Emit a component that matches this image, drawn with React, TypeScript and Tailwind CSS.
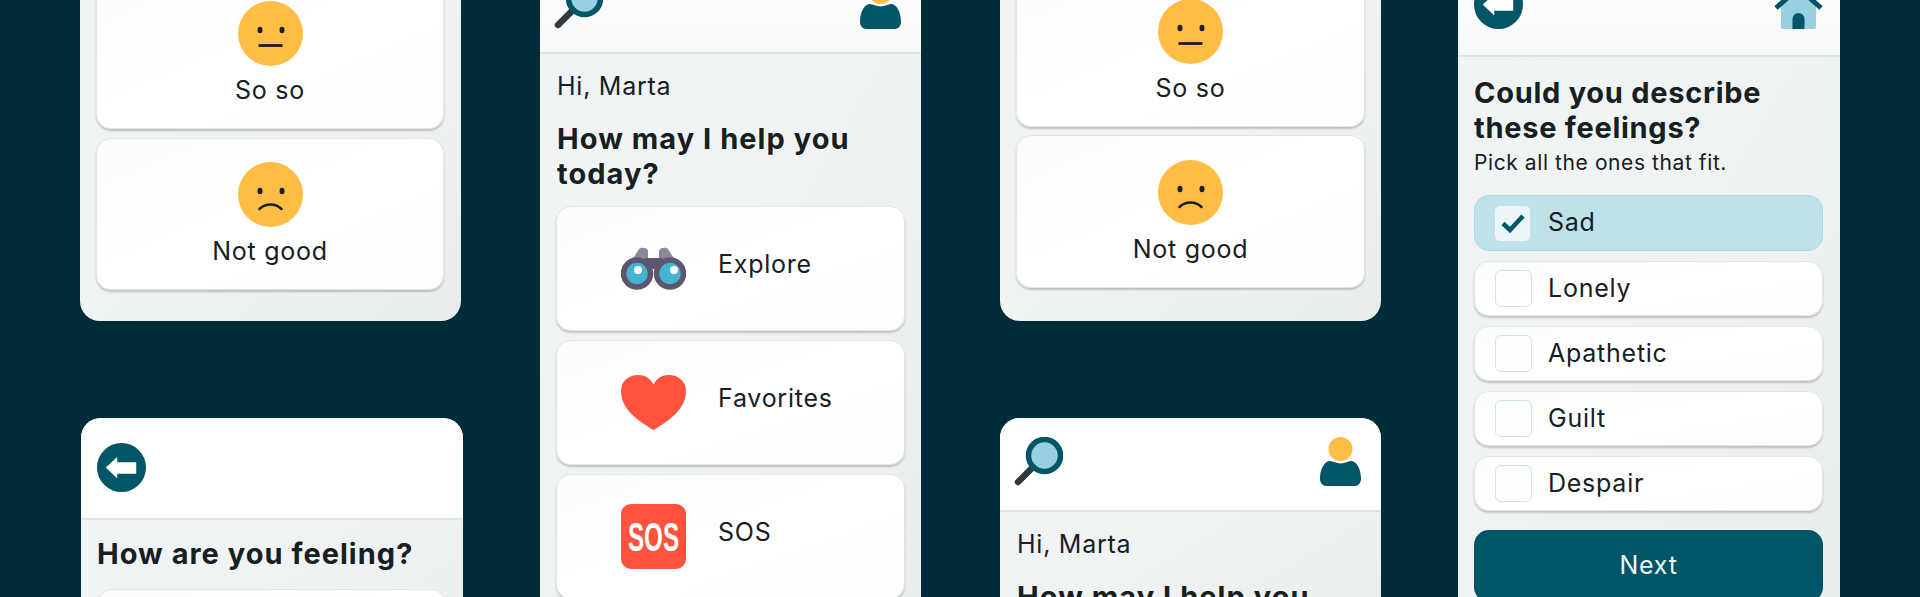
import type { ReactNode } from 'react'

const FONT = 'font-["Inter","Noto_Sans",sans-serif]'

function BackIcon() {
  return (
    <svg width="49" height="49" viewBox="0 0 49 49">
      <circle cx="24.5" cy="24.5" r="24.5" fill="#005567" />
      <path d="M9 24.500 20 14.500v5h19v11H20v4.500z" fill="#fff" stroke="#fff" strokeLinejoin="round" strokeWidth="0.5" />
    </svg>
  )
}

function SearchIcon() {
  return (
    <svg width="49" height="49" viewBox="0 0 49 49">
      <path d="M4 45 18 31" stroke="#2f3a40" strokeWidth="6.5" strokeLinecap="round" />
      <circle cx="30.5" cy="18.5" r="16" fill="#97d0de" stroke="#005567" strokeWidth="5.5" />
    </svg>
  )
}

function PersonIcon() {
  return (
    <svg width="41" height="49" viewBox="0 0 41 49">
      <circle cx="20.5" cy="12" r="12" fill="#ffbd45" />
      <path
        d="M10 24c3 0 6 2.500 10.500 2.500S28 24 31 24c5 0 10 7 10 18 0 4-3 7-6 7H6c-3 0-6-3-6-7 0-11 5-18 10-18z"
        fill="#005567"
      />
    </svg>
  )
}

function HomeIcon() {
  return (
    <svg width="49" height="49" viewBox="0 0 49 49">
      <path d="M7 26 24.500 10 42 26v21a2 2 0 0 1-2 2H9a2 2 0 0 1-2-2z" fill="#97d0de" />
      <path d="M2 28 24.500 8 47 28" fill="none" stroke="#005567" strokeWidth="5" />
      <path d="M18.500 49V39a6 6 0 0 1 12 0v10z" fill="#005567" />
    </svg>
  )
}

function Binoculars() {
  return (
    <svg width="65" height="65" viewBox="0 0 65 65">
      <path d="M5 34 18 13c2-2 8-2 9 2v19zM60 34 47 13c-2-2-8-2-9 2v19z" fill="#8b8795" />
      <rect x="24" y="22" width="17" height="11" fill="#5e5570" />
      <circle cx="16" cy="37.500" r="13.500" fill="#46b4cf" stroke="#5e5570" strokeWidth="5.500" />
      <circle cx="49" cy="37.500" r="13.500" fill="#46b4cf" stroke="#5e5570" strokeWidth="5.500" />
      <circle cx="17" cy="34" r="4" fill="#fff" />
      <circle cx="53" cy="34" r="4" fill="#fff" />
    </svg>
  )
}

function Heart() {
  return (
    <svg width="65" height="65" viewBox="0 0 65 65">
      <path
        d="M32.500 60C14 49 0 38 0 21 0 11 8 5 17 5c7 0 12 3 15.500 9.500C36 8 41 5 48 5c9 0 17 6 17 16 0 17-14 28-32.500 39z"
        fill="#ff533d"
      />
    </svg>
  )
}

function SosIcon() {
  return (
    <svg width="65" height="65" viewBox="0 0 65 65">
      <rect width="65" height="65" rx="10" fill="#ff533d" />
      <text
        x="32.500"
        y="47"
        textAnchor="middle"
        textLength="51"
        lengthAdjust="spacingAndGlyphs"
        fill="#fff"
        fontFamily="Liberation Sans"
        fontWeight="700"
        fontSize="41"
      >
        SOS
      </text>
    </svg>
  )
}

function Face({ sad }: { sad?: boolean }) {
  return (
    <svg width="65" height="65" viewBox="0 0 65 65">
      <circle cx="32.500" cy="32.500" r="32.500" fill="#ffbd45" />
      <ellipse cx="22" cy="29" rx="2.500" ry="3.300" fill="#17201f" />
      <ellipse cx="44" cy="29" rx="2.500" ry="3.300" fill="#17201f" />
      {sad ? (
        <path d="M21.500 47c6-6 16-6 22 0" fill="none" stroke="#17201f" strokeWidth="2.500" strokeLinecap="round" />
      ) : (
        <path d="M20.500 44.500h24" stroke="#17201f" strokeWidth="2.800" />
      )}
    </svg>
  )
}

const cardClass =
  'rounded-[15px] border border-[#e2e6e7] bg-gradient-to-br from-[#fafbfb] via-white to-[#fdfdfd] shadow-[0_2px_2px_rgb(0_0_0_/_0.2)]'

function MoodCard({ label, sad, height }: { label: string; sad?: boolean; height: string }) {
  return (
    <div className={`${cardClass} flex flex-col items-center justify-end pb-[21px] ${height}`}>
      <Face sad={sad} />
      <span className="mt-[7px] text-[25px] leading-[34px] tracking-[0.03em] text-[#17201f]">{label}</span>
    </div>
  )
}

function MenuCard({ icon, label }: { icon: ReactNode; label: string }) {
  return (
    <div className={`${cardClass} flex h-[125px] shrink-0 items-center pl-[64px]`}>
      {icon}
      <span className="mb-[8px] ml-[32px] text-[25px] tracking-[0.03em] text-[#17201f]">{label}</span>
    </div>
  )
}

function Header({
  left,
  right,
  height,
  pad,
  fade,
}: {
  left: ReactNode
  right?: ReactNode
  height: string
  pad: string
  fade?: boolean
}) {
  return (
    <header
      className={`flex shrink-0 items-start justify-between border-b-2 border-[#e0e4e5] ${
        fade ? 'bg-gradient-to-b from-white to-[#f7f8f8]' : 'bg-white'
      } ${height} ${pad}`}
    >
      {left}
      {right}
    </header>
  )
}

function Greeting() {
  return (
    <div className="px-[17px] pt-[18px]">
      <p className="text-[25px] leading-[28px] tracking-[0.03em] text-[#17201f]">Hi, Marta</p>
      <h2 className="mt-[21px] text-[29px] font-bold leading-[35px] tracking-[0.036em] text-[#17201f]">
        How may I help you today?
      </h2>
    </div>
  )
}

function Option({ label, checked }: { label: string; checked?: boolean }) {
  return (
    <div
      className={
        checked
          ? 'flex h-[56px] items-center rounded-[15px] border border-[#a9d8e3] bg-[#bfe2ea] pl-[20px]'
          : `${cardClass} flex h-[55px] items-center pl-[20px]`
      }
    >
      <span
        className={
          checked
            ? 'mr-[18px] flex h-[35px] w-[35px] items-center justify-center rounded-[5px] bg-[#ecf6f9]'
            : 'mr-[16px] h-[37px] w-[37px] rounded-[6px] border border-[#d3e2e4] bg-white/40'
        }
      >
        {checked && (
          <svg width="24" height="20" viewBox="0 0 24 20">
            <path d="M2 10.500 9 17 22 3" fill="none" stroke="#005567" strokeWidth="4.500" />
          </svg>
        )}
      </span>
      <span className="text-[25px] tracking-[0.03em] text-[#17201f]">{label}</span>
    </div>
  )
}

const panelClass =
  'overflow-hidden bg-gradient-to-br from-[#f1f4f5] via-[#f0f3f4] to-[#e9edee] shadow-[0_1px_1px_rgb(0_0_0_/_0.15)]'

export default function App() {
  return (
    <div className={`flex h-[597px] gap-[78px] overflow-hidden bg-[#012d3b] pl-[80px] ${FONT}`}>
      {/* column 1 */}
      <div className="flex w-[382px] shrink-0 flex-col">
        <section className={`${panelClass} mt-[-24px] w-[381px] shrink-0 rounded-b-[20px] pb-[31px] pl-[16px] pr-[17px]`}>
          <div className="flex flex-col gap-[9px]">
            <MoodCard label="So so" height="h-[153px]" />
            <MoodCard label="Not good" sad height="h-[152px]" />
          </div>
        </section>
        <section className={`${panelClass} ml-[1px] mt-[97px] w-[382px] shrink-0 rounded-t-[20px]`}>
          <Header left={<BackIcon />} height="h-[102px]" pad="pl-[16px] pr-[17px] pt-[25px]" />
          <div className="pl-[16px] pr-[17px] pt-[17px]">
            <h2 className="text-[29px] font-bold leading-[34px] tracking-[0.035em] text-[#17201f]">
              How are you feeling?
            </h2>
            <div className={`${cardClass} mt-[18px] h-[152px]`} />
          </div>
        </section>
      </div>

      {/* column 2 */}
      <section className={`${panelClass} mt-[-39px] flex h-[660px] w-[381px] shrink-0 flex-col`}>
        <Header left={<SearchIcon />} right={<PersonIcon />} height="h-[93px]" pad="pl-[14px] pr-[20px] pt-[19px]" fade />
        <Greeting />
        <div className="mt-[15px] flex flex-col gap-[9px] px-[16px]">
          <MenuCard icon={<Binoculars />} label="Explore" />
          <MenuCard icon={<Heart />} label="Favorites" />
          <MenuCard icon={<SosIcon />} label="SOS" />
        </div>
      </section>

      {/* column 3 */}
      <div className="ml-[1px] flex w-[381px] shrink-0 flex-col">
        <section className={`${panelClass} mt-[-26px] shrink-0 rounded-b-[20px] px-[16px] pb-[33px]`}>
          <div className="flex flex-col gap-[8px]">
            <MoodCard label="So so" height="h-[153px]" />
            <MoodCard label="Not good" sad height="h-[153px]" />
          </div>
        </section>
        <section className={`${panelClass} mt-[97px] shrink-0 rounded-t-[20px]`}>
          <Header left={<SearchIcon />} right={<PersonIcon />} height="h-[94px]" pad="pl-[14px] pr-[20px] pt-[19px]" />
          <Greeting />
        </section>
      </div>

      {/* column 4 */}
      <section className={`${panelClass} ml-[-1px] mt-[-45px] flex h-[660px] w-[382px] shrink-0 flex-col`}>
        <Header left={<BackIcon />} right={<HomeIcon />} height="h-[102px]" pad="pl-[16px] pr-[17px] pt-[25px]" fade />
        <div className="flex flex-col pl-[16px] pr-[17px] pt-[18px]">
          <h2 className="text-[29px] font-bold leading-[35px] tracking-[0.025em] text-[#17201f]">
            Could you describe these feelings?
          </h2>
          <p className="mt-[4px] text-[21px] leading-[28px] tracking-[0.028em] text-[#17201f]">
            Pick all the ones that fit.
          </p>
          <div className="mt-[18px] flex flex-col gap-[10px]">
            <Option label="Sad" checked />
            <Option label="Lonely" />
            <Option label="Apathetic" />
            <Option label="Guilt" />
            <Option label="Despair" />
          </div>
          <button className="mt-[19px] h-[72px] shrink-0 rounded-[15px] bg-[#005567] text-[25px] tracking-[0.03em] text-[#eef6f7]">
            Next
          </button>
        </div>
      </section>
    </div>
  )
}
